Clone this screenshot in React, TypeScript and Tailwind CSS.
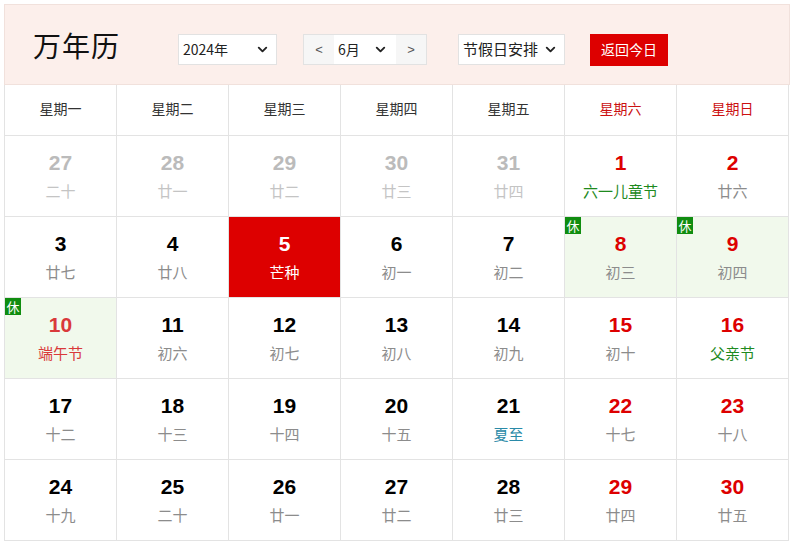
import { ChevronDown } from 'lucide-react'

type Day = {
  n: number
  lunar: string
  muted?: boolean
  red?: boolean
  rest?: boolean
  today?: boolean
  tone?: 'green' | 'red' | 'teal'
}

const weekdays = ['星期一', '星期二', '星期三', '星期四', '星期五', '星期六', '星期日']

const days: Day[] = [
  { n: 27, lunar: '二十', muted: true },
  { n: 28, lunar: '廿一', muted: true },
  { n: 29, lunar: '廿二', muted: true },
  { n: 30, lunar: '廿三', muted: true },
  { n: 31, lunar: '廿四', muted: true },
  { n: 1, lunar: '六一儿童节', red: true, tone: 'green' },
  { n: 2, lunar: '廿六', red: true },
  { n: 3, lunar: '廿七' },
  { n: 4, lunar: '廿八' },
  { n: 5, lunar: '芒种', today: true },
  { n: 6, lunar: '初一' },
  { n: 7, lunar: '初二' },
  { n: 8, lunar: '初三', red: true, rest: true },
  { n: 9, lunar: '初四', red: true, rest: true },
  { n: 10, lunar: '端午节', red: true, rest: true, tone: 'red' },
  { n: 11, lunar: '初六' },
  { n: 12, lunar: '初七' },
  { n: 13, lunar: '初八' },
  { n: 14, lunar: '初九' },
  { n: 15, lunar: '初十', red: true },
  { n: 16, lunar: '父亲节', red: true, tone: 'green' },
  { n: 17, lunar: '十二' },
  { n: 18, lunar: '十三' },
  { n: 19, lunar: '十四' },
  { n: 20, lunar: '十五' },
  { n: 21, lunar: '夏至', tone: 'teal' },
  { n: 22, lunar: '十七', red: true },
  { n: 23, lunar: '十八', red: true },
  { n: 24, lunar: '十九' },
  { n: 25, lunar: '二十' },
  { n: 26, lunar: '廿一' },
  { n: 27, lunar: '廿二' },
  { n: 28, lunar: '廿三' },
  { n: 29, lunar: '廿四', red: true },
  { n: 30, lunar: '廿五', red: true },
]

function Cell({ d }: { d: Day }) {
  // 숫자 색: 오늘 > 지난달 > 휴일(10일은 조금 옅은 빨강) > 주말 > 기본
  const numColor = d.today
    ? 'text-white'
    : d.muted
      ? 'text-[#bbbbbb]'
      : d.tone === 'red'
        ? 'text-[#d9393a]'
        : d.red
          ? 'text-[#dd0000]'
          : 'text-black'
  const lunarColor = d.today
    ? 'text-white'
    : d.muted
      ? 'text-[#c4c4c4]'
      : d.tone === 'green'
        ? 'text-[#1e8a1e]'
        : d.tone === 'red'
          ? 'text-[#d9393a]'
          : d.tone === 'teal'
            ? 'text-[#2a8aa8]'
            : 'text-[#8c8c8c]'
  const bg = d.today ? 'bg-[#dd0000]' : d.rest ? 'bg-[#f1f9ec]' : 'bg-white'

  return (
    <div className={`relative flex h-[81px] flex-col items-center border-r border-b border-[#e3e3e3] pt-[15px] ${bg}`}>
      {d.rest && (
        <span className="absolute left-0 top-0 flex h-[17px] w-[16px] items-center justify-center bg-[#108d10] text-[13px] leading-none text-white">
          休
        </span>
      )}
      <span className={`font-['Liberation_Sans',Arial,sans-serif] text-[21px] font-bold leading-[24px] ${numColor}`}>{d.n}</span>
      <span className={`mt-[6px] text-[15px] leading-[20px] ${lunarColor}`}>{d.lunar}</span>
    </div>
  )
}

export default function App() {
  return (
    <div className="min-h-screen bg-white pl-[4px] pt-[4px] font-['Noto_Sans_CJK_SC','Noto_Sans',sans-serif] text-[#333]">
      <div className="w-[786px]">
        {/* 상단 헤더 */}
        <div className="flex h-[81px] items-center border border-[#f1e1dc] bg-[#fcefeb] pl-[28px]">
          <h1 className="mr-[58px] text-[28px] leading-none tracking-[1px] text-[#111]">万年历</h1>
          <div className="mt-[10px] flex h-[31px] w-[99px] items-center justify-between border border-[#e2e2e2] bg-white pl-[4px] pr-[6px] text-[14px] text-[#222]">
            <span>2024年</span>
            <ChevronDown size={15} strokeWidth={3} />
          </div>
          <div className="ml-[26px] mt-[10px] flex h-[31px] border border-[#e2e2e2] text-[14px] text-[#222]">
            <span className="flex w-[30px] items-center justify-center bg-[#f6f6f6] font-['Liberation_Sans',sans-serif] text-[13px] text-[#555]">&lt;</span>
            <span className="flex w-[62px] items-center justify-between bg-white pl-[4px] pr-[8px]">
              6月
              <ChevronDown size={15} strokeWidth={3} />
            </span>
            <span className="flex w-[30px] items-center justify-center bg-[#f6f6f6] font-['Liberation_Sans',sans-serif] text-[13px] text-[#555]">&gt;</span>
          </div>
          <div className="ml-[31px] mt-[10px] flex h-[31px] w-[107px] items-center justify-between border border-[#e2e2e2] bg-white pl-[4px] pr-[6px] text-[15px] text-[#222]">
            <span>节假日安排</span>
            <ChevronDown size={15} strokeWidth={3} />
          </div>
          <button className="ml-[25px] mt-[10px] flex h-[32px] w-[78px] items-center justify-center bg-[#dd0000] text-[14px] text-white">
            返回今日
          </button>
        </div>

        {/* 요일 + 날짜 그리드 */}
        <div className="grid w-[785px] grid-cols-7 border-l border-[#e3e3e3]">
          {weekdays.map((w, i) => (
            <div
              key={w}
              className={`flex h-[51px] items-center justify-center border-r border-b border-[#e3e3e3] pb-[4px] text-[14px] ${i > 4 ? 'text-[#cc1111]' : 'text-[#333]'}`}
            >
              {w}
            </div>
          ))}
          {days.map((d, i) => (
            <Cell key={i} d={d} />
          ))}
        </div>
      </div>
    </div>
  )
}
